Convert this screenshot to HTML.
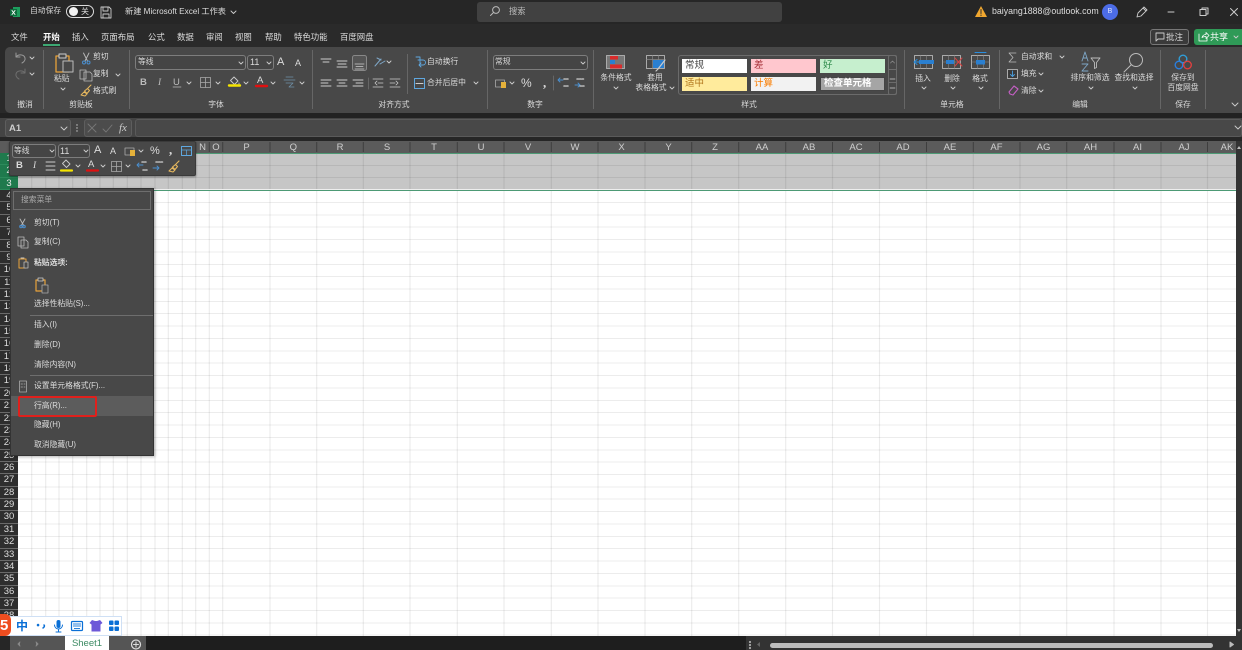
<!DOCTYPE html>
<html lang="zh"><head><meta charset="utf-8"><title>Excel</title>
<style>
html,body{margin:0;padding:0;background:#2b2b2b}
#r{position:relative;width:1242px;height:650px;overflow:hidden;background:#fff;font-family:"Liberation Sans","Noto Sans CJK SC",sans-serif;filter:blur(.35px)}
#r div,#r span{position:absolute;box-sizing:border-box}
.t{white-space:nowrap;color:#dcdcdc;font-size:7.8px;line-height:10px}
.tab{font-size:8.4px}
.c{transform:translateX(-50%)}
.box{border:1px solid #7d7d7d;border-radius:3px;background:#454545}
.sep{width:1px;background:#666}
#rh{left:0;top:153px;width:18px;height:484px;background:#2e2e2e}
#rh>div{position:relative!important;width:18px;height:12.365px;border-bottom:1px solid #6a6a6a;color:#ddd;font-size:9.5px;line-height:11.5px;text-align:center}
#rh>div.s{background:#1f7a4d;color:#e8e8e8;border-bottom-color:#2c8a5b}
.col{top:142px;height:12px;font-size:9.5px;line-height:12px;color:#cfcfcf;transform:translateX(-50%);white-space:nowrap}
.m{left:34px;font-size:7.8px;line-height:10px;color:#dcdcdc;white-space:nowrap}
.st{height:14px;font-size:9.5px;line-height:14px;padding-left:3px;white-space:nowrap}
</style></head><body><div id="r">

<!-- chrome backgrounds -->
<div style="left:0;top:0;width:1242px;height:24px;background:#262626"></div>
<div style="left:0;top:24px;width:1242px;height:93px;background:#2a2a2a"></div>
<div style="left:5px;top:47px;width:1237px;height:66px;background:#484848;border-radius:5px 0 0 5px"></div>
<div style="left:0;top:113px;width:1242px;height:28px;background:#222"></div>
<div style="left:0;top:118px;width:1242px;height:19px;background:#444"></div>
<div style="left:0;top:137px;width:1242px;height:4px;background:#262626"></div>

<!-- grid -->
<div style="left:18px;top:153px;width:1218px;height:37.5px;background:#c6c6c6"></div>
<div style="left:18px;top:153px;width:1218px;height:483px;background-image:repeating-linear-gradient(to bottom,transparent 0,transparent 11.365px,rgba(0,0,0,.075) 11.365px,rgba(0,0,0,.075) 12.365px);background-position:0 .5px"></div>
<svg style="position:absolute;left:0;top:0" width="1242" height="650"><path fill="none" stroke="#000" stroke-opacity=".075" stroke-width="1.2" d="M31.7 153V636M45.7 153V636M59 153V636M72.7 153V636M86.7 153V636M100 153V636M113.3 153V636M127.3 153V636M141 153V636M155 153V636M168.3 153V636M182.3 153V636M195.7 153V636M209.3 153V636M222.7 153V636M270 153V636M316.7 153V636M363.3 153V636M410 153V636M457.3 153V636M504 153V636M551.3 153V636M598 153V636M645 153V636M691.7 153V636M738.7 153V636M785.7 153V636M832.5 153V636M879.5 153V636M926.5 153V636M973.3 153V636M1020 153V636M1066.7 153V636M1114 153V636M1161 153V636M1207.5 153V636"/></svg>
<div style="left:18px;top:189px;width:1218px;height:1px;background:#eee"></div>
<div style="left:18px;top:190px;width:1218px;height:1.4px;background:#4d9a75"></div>

<!-- column headers -->
<div style="left:0;top:141px;width:1236px;height:12px;background:#5b5b5b"></div>
<div style="left:18px;top:152.500px;width:1218px;height:1.2px;background:#4d9a75"></div>
<svg style="position:absolute;left:0;top:0" width="1242" height="155"><path fill="none" stroke="#3e3e3e" stroke-width="1" d="M195.7 142V152M209.3 142V152M222.7 142V152M270 142V152M316.7 142V152M363.3 142V152M410 142V152M457.3 142V152M504 142V152M551.3 142V152M598 142V152M645 142V152M691.7 142V152M738.7 142V152M785.7 142V152M832.5 142V152M879.5 142V152M926.5 142V152M973.3 142V152M1020 142V152M1066.7 142V152M1114 142V152M1161 142V152M1207.5 142V152"/></svg>
<span class="col" style="left:202.5px">N</span><span class="col" style="left:216px">O</span><span class="col" style="left:246.5px">P</span><span class="col" style="left:293.3px">Q</span><span class="col" style="left:340px">R</span><span class="col" style="left:387px">S</span><span class="col" style="left:434px">T</span><span class="col" style="left:481px">U</span><span class="col" style="left:528px">V</span><span class="col" style="left:575px">W</span><span class="col" style="left:621.5px">X</span><span class="col" style="left:668.5px">Y</span><span class="col" style="left:715px">Z</span><span class="col" style="left:762px">AA</span><span class="col" style="left:809px">AB</span><span class="col" style="left:856px">AC</span><span class="col" style="left:903px">AD</span><span class="col" style="left:950px">AE</span><span class="col" style="left:996.5px">AF</span><span class="col" style="left:1043.5px">AG</span><span class="col" style="left:1090.5px">AH</span><span class="col" style="left:1137.5px">AI</span><span class="col" style="left:1184px">AJ</span><span class="col" style="left:1227px">AK</span>

<!-- row headers -->
<div id="rh"><div class="s">1</div><div class="s">2</div><div class="s">3</div><div>4</div><div>5</div><div>6</div><div>7</div><div>8</div><div>9</div><div>10</div><div>11</div><div>12</div><div>13</div><div>14</div><div>15</div><div>16</div><div>17</div><div>18</div><div>19</div><div>20</div><div>21</div><div>22</div><div>23</div><div>24</div><div>25</div><div>26</div><div>27</div><div>28</div><div>29</div><div>30</div><div>31</div><div>32</div><div>33</div><div>34</div><div>35</div><div>36</div><div>37</div><div>38</div><div>39</div></div>

<!-- right scrollbar -->
<div style="left:1236px;top:141px;width:6px;height:495px;background:#333"></div>

<!-- status bar -->
<div style="left:0;top:636px;width:1242px;height:14px;background:#262626"></div>
<div style="left:10px;top:636px;width:55px;height:14px;background:#555"></div>
<div style="left:65px;top:636px;width:44px;height:14px;background:#fff;color:#3c8a63;font-size:9.5px;line-height:16px;text-align:center">Sheet1</div>
<div style="left:109px;top:636px;width:37px;height:14px;background:#555"></div>
<div style="left:146px;top:636px;width:600px;height:14px;background:#1e1e1e"></div>
<div style="left:746px;top:636px;width:496px;height:14px;background:#333"></div>
<div style="left:770px;top:643px;width:443px;height:5px;background:#bdbdbd;border-radius:3px"></div>

<!-- mini toolbar -->
<div style="left:9px;top:141px;width:187px;height:35px;background:#484848;border:1px solid #3a3a3a;border-radius:2px;box-shadow:0 1px 2px rgba(0,0,0,.4)"></div>
<div class="box" style="left:12px;top:144px;width:44px;height:14px"></div>
<div class="box" style="left:58px;top:144px;width:32px;height:14px"></div>
<span class="t" style="left:14px;top:146px">等线</span>
<span class="t" style="left:60px;top:146px;font-size:9px">11</span>

<!-- context menu -->
<div style="left:10px;top:188px;width:144px;height:268px;background:#484848;border:1px solid #333;box-shadow:1px 1px 3px rgba(0,0,0,.3)"></div>
<div style="left:13px;top:191px;width:138px;height:19px;border:1px solid #6e6e6e"></div>
<span class="m" style="left:21px;top:195px;color:#aaa">搜索菜单</span>
<div style="left:11px;top:396px;width:142px;height:20px;background:#5c5c5c"></div>
<div style="left:30px;top:315px;width:123px;height:1px;background:#6e6e6e"></div>
<div style="left:30px;top:375px;width:123px;height:1px;background:#6e6e6e"></div>
<span class="m" style="top:218px">剪切(T)</span>
<span class="m" style="top:237px">复制(C)</span>
<span class="m" style="top:258px;font-weight:bold">粘贴选项:</span>
<span class="m" style="top:299px">选择性粘贴(S)...</span>
<span class="m" style="top:320px">插入(I)</span>
<span class="m" style="top:340px">删除(D)</span>
<span class="m" style="top:360px">清除内容(N)</span>
<span class="m" style="top:381px">设置单元格格式(F)...</span>
<span class="m" style="top:401px">行高(R)...</span>
<span class="m" style="top:420px">隐藏(H)</span>
<span class="m" style="top:440px">取消隐藏(U)</span>
<div style="left:18px;top:396px;width:79px;height:21px;border:2px solid #e0201c;border-radius:2px"></div>

<!-- IME toolbar -->
<div style="left:0;top:616px;width:122px;height:20px;background:#fff;border:1px solid #cfe0f5"></div>
<div style="left:-8px;top:614px;width:19px;height:22px;background:#ee4d1f;border-radius:6px"></div>
<span class="t" style="left:0;top:617px;font-size:15px;line-height:18px;font-weight:bold;color:#fff">5</span>
<span class="t" style="left:16px;top:619px;font-size:12px;line-height:14px;font-weight:bold;color:#0a6fd6">中</span>

<!-- title bar -->
<span class="t" style="left:30px;top:6px">自动保存</span>
<div style="left:66px;top:5px;width:28px;height:13px;border:1px solid #ddd;border-radius:7px;background:#222"></div>
<div style="left:69px;top:7px;width:9px;height:9px;border-radius:50%;background:#f2f2f2"></div>
<span class="t" style="left:81px;top:7px;font-size:8px;line-height:9px">关</span>
<span class="t" style="left:125px;top:6px;font-size:8.2px;line-height:12px">新建 Microsoft Excel 工作表</span>
<div style="left:477px;top:2px;width:305px;height:20px;background:#414141;border-radius:3px"></div>
<span class="t" style="left:509px;top:6px;font-size:8.3px;color:#bbb">搜索</span>
<span class="t" style="left:992px;top:6px;font-size:8.8px;line-height:11px">baiyang1888@outlook.com</span>
<div style="left:1102px;top:4px;width:16px;height:16px;border-radius:50%;background:#4c6ce6;color:#dfe6ff;font-size:7px;line-height:16px;text-align:center">B</div>

<!-- tabs -->
<span class="t tab" style="left:11px;top:32px">文件</span>
<span class="t tab" style="left:43px;top:32px;font-weight:bold;color:#fff">开始</span>
<div style="left:43px;top:44px;width:17px;height:1.5px;background:#3da873"></div>
<span class="t tab" style="left:72px;top:32px">插入</span>
<span class="t tab" style="left:101px;top:32px">页面布局</span>
<span class="t tab" style="left:148px;top:32px">公式</span>
<span class="t tab" style="left:177px;top:32px">数据</span>
<span class="t tab" style="left:206px;top:32px">审阅</span>
<span class="t tab" style="left:235px;top:32px">视图</span>
<span class="t tab" style="left:265px;top:32px">帮助</span>
<span class="t tab" style="left:294px;top:32px">特色功能</span>
<span class="t tab" style="left:340px;top:32px">百度网盘</span>
<div style="left:1150px;top:29px;width:39px;height:16px;border:1px solid #777;border-radius:3px;background:#3a3a3a"></div>
<span class="t" style="left:1166px;top:32px;font-size:8.5px">批注</span>
<div style="left:1194px;top:29px;width:48px;height:16px;background:#2f9a57;border-radius:3px 0 0 3px"></div>
<span class="t" style="left:1210px;top:32px;font-size:9px;color:#fff">共享</span>

<!-- ribbon separators -->
<div class="sep" style="left:43px;top:50px;height:59px"></div>
<div class="sep" style="left:129px;top:50px;height:59px"></div>
<div class="sep" style="left:312px;top:50px;height:59px"></div>
<div class="sep" style="left:407px;top:54px;height:40px"></div>
<div class="sep" style="left:487px;top:50px;height:59px"></div>
<div class="sep" style="left:593px;top:50px;height:59px"></div>
<div class="sep" style="left:904px;top:50px;height:59px"></div>
<div class="sep" style="left:999px;top:50px;height:59px"></div>
<div class="sep" style="left:1160px;top:50px;height:59px"></div>
<div class="sep" style="left:1205px;top:50px;height:59px"></div>

<!-- ribbon text -->
<span class="t c" style="left:25px;top:100px">撤消</span>
<span class="t c" style="left:81px;top:100px">剪贴板</span>
<span class="t c" style="left:216px;top:100px">字体</span>
<span class="t c" style="left:394px;top:100px">对齐方式</span>
<span class="t c" style="left:535px;top:100px">数字</span>
<span class="t c" style="left:749px;top:100px">样式</span>
<span class="t c" style="left:952px;top:100px">单元格</span>
<span class="t c" style="left:1080px;top:100px">编辑</span>
<span class="t c" style="left:1183px;top:100px">保存</span>

<span class="t" style="left:54px;top:74px">粘贴</span>
<span class="t" style="left:93px;top:52px">剪切</span>
<span class="t" style="left:93px;top:69px">复制</span>
<span class="t" style="left:93px;top:86px">格式刷</span>

<div class="box" style="left:135px;top:55px;width:111px;height:15px"></div>
<div class="box" style="left:247px;top:55px;width:27px;height:15px"></div>
<span class="t" style="left:138px;top:57px">等线</span>
<span class="t" style="left:250px;top:57px;font-size:9px">11</span>
<span class="t" style="left:140px;top:78px;font-size:9.5px;font-weight:bold;color:#bbb">B</span>
<span class="t" style="left:158px;top:78px;font-size:9.5px;font-style:italic;font-family:'Liberation Serif',serif;color:#bbb">I</span>
<span class="t" style="left:173px;top:78px;font-size:9.5px;color:#bbb">U</span>
<span class="t" style="left:277px;top:56px;font-size:11px;line-height:13px">A</span>
<span class="t" style="left:295px;top:58px;font-size:9px">A</span>
<span class="t" style="left:257px;top:76px;font-size:9.5px">A</span>
<span class="t" style="left:427px;top:57px">自动换行</span>
<span class="t" style="left:427px;top:78px">合并后居中</span>

<div class="box" style="left:493px;top:55px;width:95px;height:15px"></div>
<span class="t" style="left:495px;top:57px">常规</span>
<span class="t" style="left:521px;top:77px;font-size:12px;line-height:13px">%</span>
<span class="t" style="left:543px;top:76px;font-size:13px;line-height:13px;font-weight:bold;font-family:'Liberation Serif',serif">,</span>

<span class="t c" style="left:616px;top:73px">条件格式</span>
<span class="t c" style="left:655px;top:73px">套用</span>
<span class="t c" style="left:651px;top:83px">表格格式</span>

<!-- styles gallery -->
<div style="left:678px;top:55px;width:219px;height:40px;border:1px solid #6b6b6b;border-radius:3px"></div>
<div class="st" style="left:682px;top:59px;width:65px;background:#fff;color:#444">常规</div>
<div class="st" style="left:751px;top:59px;width:65px;background:#ffc7ce;color:#a9343c">差</div>
<div class="st" style="left:820px;top:59px;width:65px;background:#c6efce;color:#2d8a4a">好</div>
<div class="st" style="left:682px;top:77px;width:65px;background:#ffeb9c;color:#b0741a">适中</div>
<div class="st" style="left:751px;top:77px;width:65px;background:#f2f2f2;color:#fa7d00">计算</div>
<div class="st" style="left:820px;top:77px;width:65px;background:#a5a5a5;color:#fff;font-weight:bold;border:1px solid #444;line-height:12px">检查单元格</div>
<div style="left:888px;top:55px;width:9px;height:40px;border:1px solid #6b6b6b;border-radius:2px"></div>
<div style="left:888px;top:69px;width:9px;height:1px;background:#6b6b6b"></div>
<div style="left:888px;top:82px;width:9px;height:1px;background:#6b6b6b"></div>

<span class="t c" style="left:923px;top:74px">插入</span>
<span class="t c" style="left:952px;top:74px">删除</span>
<span class="t c" style="left:980px;top:74px">格式</span>
<span class="t" style="left:1021px;top:52px">自动求和</span>
<span class="t" style="left:1021px;top:69px">填充</span>
<span class="t" style="left:1021px;top:86px">清除</span>
<span class="t c" style="left:1090px;top:73px">排序和筛选</span>
<span class="t c" style="left:1134px;top:73px">查找和选择</span>
<span class="t c" style="left:1183px;top:73px">保存到</span>
<span class="t c" style="left:1183px;top:83px">百度网盘</span>

<!-- formula bar -->
<div style="left:5px;top:119px;width:66px;height:18px;background:#4c4c4c;border:1px solid #5e5e5e;border-radius:3px"></div>
<span class="t" style="left:9px;top:123px;font-size:9.5px;line-height:11px;font-weight:bold;color:#ccc">A1</span>
<div style="left:84px;top:119px;width:48px;height:18px;background:#4c4c4c;border:1px solid #5e5e5e;border-radius:3px"></div>
<div style="left:135px;top:119px;width:1107px;height:18px;background:#484848;border:1px solid #5a5a5a;border-radius:3px"></div>
<span class="t" style="left:119px;top:122px;font-size:11px;line-height:12px;font-style:italic;font-family:'Liberation Serif',serif;color:#ccc">fx</span>

<!-- mini toolbar text -->
<span class="t" style="left:94px;top:144px;font-size:11px;line-height:13px">A</span>
<span class="t" style="left:110px;top:146px;font-size:9px">A</span>
<span class="t" style="left:150px;top:145px;font-size:11px;line-height:13px">%</span>
<span class="t" style="left:169px;top:143px;font-size:13px;line-height:13px;font-weight:bold;font-family:'Liberation Serif',serif">,</span>
<span class="t" style="left:16px;top:161px;font-size:9.5px;font-weight:bold">B</span>
<span class="t" style="left:33px;top:161px;font-size:9.5px;font-style:italic;font-family:'Liberation Serif',serif">I</span>
<span class="t" style="left:88px;top:160px;font-size:9.5px">A</span>

<!-- icons overlay -->
<svg style="position:absolute;left:0;top:0" width="1242" height="650" fill="none" stroke-linecap="round" stroke-linejoin="round">
<!-- excel -->
<path d="M13 7h7v10h-7z" fill="#1d9e5e"/><path d="M10 9h7v7h-7z" fill="#0f6b3c"/><path d="M12 10.5l3 4M15 10.5l-3 4" stroke="#fff" stroke-width=".9"/>
<!-- save -->
<path d="M101 7h8l2 2v9h-10zM103 7v4h5V7M103 18v-4h6v4" stroke="#ccc" stroke-width=".9"/>
<!-- search -->
<circle cx="496" cy="10" r="3.4" stroke="#bbb"/><path d="M493.5 12.5l-3 3" stroke="#bbb"/>
<!-- warning -->
<path d="M981 6l6 11h-12z" fill="#f0a72f"/><path d="M981 9.5v4M981 15v.6" stroke="#333" stroke-width="1"/>
<!-- pen -->
<path d="M1137 17l1-4 6-6 3 3-6 6zM1143 8l3 3" stroke="#ccc" stroke-width=".9"/>
<!-- window controls -->
<path d="M1168 12h6" stroke="#ccc"/><path d="M1200 9.5h6v6h-6zM1202 9.500v-1.500h6v6h-2" stroke="#ccc"/><path d="M1230.500 8.500l7 7M1237.500 8.500l-7 7" stroke="#ccc"/>
<!-- comment, share -->
<path d="M1156 33h8v6h-6l-2 2z" stroke="#ccc" stroke-width=".9"/>
<path d="M1199 34v7h8v-3M1202 37.500c.6-2 2-3 4-3v-2l3 3-3 3v-2c-1.500 0-3 .3-4 1" stroke="#fff" stroke-width=".8"/>
<!-- undo redo -->
<path d="M16 53v4h4M16 57c2-3 8-3 9 1 .5 2-1 4-3 5" stroke="#9a9a9a" stroke-width="1"/>
<path d="M25 69v4h-4M25 73c-2-3-8-3-9 1-.5 2 1 4 3 5" stroke="#6f6f6f" stroke-width="1"/>
<!-- paste -->
<path d="M56 56h13v16h-13z" stroke="#e7a23a" stroke-width="1.300"/><path d="M59 54h7v4h-7z" stroke="#ccc" fill="#484848"/><path d="M63 61h10v11h-10z" stroke="#bbb" fill="#484848"/>
<!-- cut copy brush -->
<path d="M83.500 53l4 8M89 53l-4 8" stroke="#bbb" stroke-width=".9"/><circle cx="84" cy="62.500" r="1.500" stroke="#4a8fd0"/><circle cx="88.500" cy="62.500" r="1.500" stroke="#4a8fd0"/>
<path d="M80 70h6v9h-6zM84 72h6l2 2v7h-8z" stroke="#bbb" stroke-width=".8" /><path d="M81 95l3-3 3 2-2 2zM84.500 91l3-2.500 2 2-2.500 3zM88 88l3-3" stroke="#e7b85e" stroke-width="1"/>
<!-- underline + borders + fill -->
<path d="M173 87h8" stroke="#bbb" stroke-width=".7"/>
<path d="M200.500 77.500h10v10h-10zM205.500 77.500v10M200.500 82.500h10" stroke="#aaa" stroke-width=".8"/>
<path d="M234 77l4 4-3.500 3.500-4-4zM239 83v1" stroke="#ccc" stroke-width=".9"/><path d="M229 85.500h11" stroke="#f5e400" stroke-width="2.400"/>
<path d="M256 86h11" stroke="#e01010" stroke-width="2.400"/>
<path d="M284 80h11M286 77h7M286 83h7l-4 4h5" stroke="#6f90a8" stroke-width=".8"/>
<!-- align -->
<path d="M321 59h10M323 62h6M337 61h10M338 64h8M337 67h10" stroke="#ccc" stroke-width=".9"/>
<rect x="352.500" y="55.500" width="14" height="15" rx="2" stroke="#888" fill="#555"/><path d="M355 64h9M356 66.500h7M355 69h9" stroke="#ccc" stroke-width=".8"/>
<path d="M375 66l6-7M377 58l4 2M380 64l5-3" stroke="#7fa7c7" stroke-width="1"/>
<path d="M321 80h10M321 83h7M321 86h10M337 80h10M339 83h6M337 86h10M353 80h10M356 83h7M353 86h10" stroke="#ccc" stroke-width=".9"/>
<path d="M373 79h10M373 87h10M378 83h5M375 83l2-2M375 83l2 2" stroke="#ccc" stroke-width=".8"/><path d="M390 79h10M390 87h10M390 83h5M398 83l-2-2M398 83l-2 2" stroke="#ccc" stroke-width=".8"/>
<path d="M368.500 78v11" stroke="#666"/>
<!-- wrap / merge -->
<path d="M416 57h4v7M418 60h5a2 2 0 0 1 0 5h-4M421 63l-2 2 2 2" stroke="#5fa8e0" stroke-width=".9"/>
<rect x="414.500" y="78.500" width="10" height="10" stroke="#5fa8e0"/><path d="M416 83.500h7" stroke="#ccc"/>
<!-- number -->
<path d="M495.500 80h9v7h-9z" stroke="#aaa" stroke-width=".8"/><rect x="501" y="82" width="5" height="6" fill="#e5b13a"/>
<path d="M553.500 76v14" stroke="#666"/>
<path d="M558 80h5M560 78l-2 2 2 2" stroke="#4a90d0" stroke-width=".9"/><path d="M564 79h4M564 86h4" stroke="#bbb" stroke-width="1.600" stroke-dasharray="1.500 1"/>
<path d="M580 85h-5M578 83l2 2-2 2" stroke="#4a90d0" stroke-width=".9"/><path d="M577 79h7M580 86h5" stroke="#bbb" stroke-width="1.600" stroke-dasharray="1.500 1"/>
<!-- cond fmt -->
<rect x="606.500" y="55.500" width="18" height="13" stroke="#aaa" fill="#777"/><rect x="610" y="56" width="8" height="3.500" fill="#d92b2b"/><rect x="610" y="60" width="5" height="4" fill="#2a7fd0"/><rect x="610" y="64.500" width="12" height="4" fill="#d92b2b"/>
<!-- table fmt -->
<rect x="646.500" y="55.500" width="18" height="13" stroke="#aaa"/><path d="M646.500 59.500h18M652.500 55.500v13M658.500 55.500v13" stroke="#888" stroke-width=".7"/><rect x="653" y="60" width="11" height="8" fill="#2a7fd0"/><path d="M665 60l-7 9-2 2" stroke="#ccc" stroke-width="1.200"/>
<!-- style scrolls -->
<path d="M890.500 63l2-2 2 2" stroke="#888" stroke-width=".8"/><path d="M890 79h5M890 88h5" stroke="#ccc" stroke-width=".7"/>
<!-- insert delete format -->
<rect x="914.500" y="55.500" width="18" height="13" stroke="#aaa"/><path d="M914.500 62h18M920.500 55.500v13M926.500 55.500v13" stroke="#888" stroke-width=".6"/><rect x="919" y="60" width="15" height="4" fill="#2a7fd0"/><path d="M914 62h6M917 59.500l-3 2.500 3 2.500" stroke="#2a8fe0" stroke-width="1"/>
<rect x="942.500" y="55.500" width="18" height="13" stroke="#aaa"/><path d="M942.500 62h18M948.500 55.500v13M954.500 55.500v13" stroke="#888" stroke-width=".6"/><rect x="946" y="60" width="8" height="4" fill="#2a7fd0"/><path d="M955 58l7 8M962 58l-7 8" stroke="#d84040" stroke-width="1"/>
<rect x="971.500" y="55.500" width="18" height="13" stroke="#aaa"/><path d="M971.500 62h18M977.500 55.500v13M983.500 55.500v13" stroke="#888" stroke-width=".6"/><rect x="976" y="60" width="9" height="4.500" fill="#2a7fd0"/><path d="M975 52.500h11" stroke="#2a8fe0"/>
<!-- editing -->
<path d="M1016 53h-7l4 4.500-4 4.500h7" stroke="#bbb" stroke-width=".8"/>
<rect x="1007.500" y="69.500" width="10" height="9" stroke="#aaa" fill="#3a3a3a"/><path d="M1012.500 71v5M1010.500 74.500l2 2 2-2" stroke="#4a9fe0" stroke-width=".9"/>
<path d="M1009 92l5-6 4 3-5 6-3-1z" stroke="#c55fc5" stroke-width="1.100"/>
<!-- sort & find -->
<path d="M1085 52l-3 9M1085 52l3 9M1083 58h4M1082 64h6l-6 7h6" stroke="#7fa7c7" stroke-width=".9"/><path d="M1091 58h9l-3.500 4.500v5l-2 1v-6z" stroke="#bbb" stroke-width=".9"/>
<circle cx="1136" cy="60" r="6.500" stroke="#bbb" stroke-width="1"/><path d="M1131 65l-7 7" stroke="#bbb" stroke-width="1"/>
<!-- baidu -->
<circle cx="1183" cy="59" r="3.800" stroke="#2f9ed8" stroke-width="1.400"/><circle cx="1179" cy="65" r="3.800" stroke="#2a7fe0" stroke-width="1.400"/><circle cx="1187.500" cy="65" r="3.800" stroke="#e04040" stroke-width="1.400"/>
<!-- carets -->
<path d="M30 57l2 2 2-2M30 73l2 2 2-2M61 88l2 2 2-2M116 74l2 2 2-2M239 62l2 2 2-2M267 62l2 2 2-2M187 82l2 2 2-2M216 82l2 2 2-2M244 82l2 2 2-2M271 82l2 2 2-2M300 82l2 2 2-2M387 61l2 2 2-2M474 82l2 2 2-2M581 62l2 2 2-2M510 82l2 2 2-2M614 87l2 2 2-2M670 87l2 2 2-2M922 87l2 2 2-2M951 87l2 2 2-2M979 87l2 2 2-2M1060 56l2 2 2-2M1039 73l2 2 2-2M1039 90l2 2 2-2M1089 87l2 2 2-2M1133 87l2 2 2-2M1232 103l3 3 3-3M1235 126l3 3 3-3M61 127l3 3 3-3M231 11l2.500 2.500 2.500-2.500M1234 36l2 2 2-2M50 150l2 2 2-2M84 150l2 2 2-2M139 150l2 2 2-2M76 165l2 2 2-2M101 165l2 2 2-2M126 165l2 2 2-2" stroke="#ccc" stroke-width=".9"/>
<!-- formula-bar icons -->
<circle cx="77" cy="125" r=".7" fill="#ccc"/><circle cx="77" cy="128" r=".7" fill="#ccc"/><circle cx="77" cy="131" r=".7" fill="#ccc"/>
<path d="M88 124l8 8M96 124l-8 8M103 129l3 3 6-7" stroke="#777" stroke-width=".9"/>
<!-- mini toolbar icons -->
<path d="M125 148h9v7h-9z" stroke="#aaa" stroke-width=".8"/><rect x="130" y="150" width="5" height="6" fill="#e5b13a"/>
<rect x="181.500" y="146.500" width="10" height="9" stroke="#5fa8e0"/><path d="M181.500 150h10M186.500 150v5" stroke="#5fa8e0" stroke-width=".7"/>
<path d="M46 162h9M46 166h9M46 170h9" stroke="#ccc" stroke-width=".9"/>
<path d="M66 160l4 4-3.500 3.500-4-4z" stroke="#ccc" stroke-width=".9"/><path d="M61 170.500h11" stroke="#f5e400" stroke-width="2.200"/>
<path d="M87 170.500h11" stroke="#e01010" stroke-width="2.200"/>
<path d="M111.500 161.500h10v10h-10zM116.500 161.500v10M111.500 166.500h10" stroke="#aaa" stroke-width=".8"/>
<path d="M137 165h6M139 163l-2 2 2 2" stroke="#4a90d0" stroke-width=".9"/><path d="M142 162h5M143 170h4" stroke="#bbb" stroke-width="1.600" stroke-dasharray="1.500 1"/>
<path d="M159 168h-6M157 166l2 2-2 2" stroke="#4a90d0" stroke-width=".9"/><path d="M156 162h7" stroke="#bbb" stroke-width="1.600" stroke-dasharray="1.500 1"/>
<path d="M169 171l3-3 3 2-2 2zM172.500 167l3-2.500 2 2-2.500 3zM176 164l3-3" stroke="#e7b85e" stroke-width="1.100"/>
<!-- menu icons -->
<path d="M20 219l4 7M25 219l-4 7" stroke="#bbb" stroke-width=".9"/><circle cx="21" cy="226.500" r="1.300" stroke="#4a8fd0"/><circle cx="24" cy="226.500" r="1.300" stroke="#4a8fd0"/>
<path d="M18 237h6v9h-6zM21 240h5l2 2v6h-7z" stroke="#bbb" stroke-width=".8"/>
<path d="M19 259h7v9h-7z" stroke="#e7a23a" stroke-width="1"/><path d="M24 262h4v6h-4z" stroke="#bbb" fill="#484848" stroke-width=".8"/><path d="M21 258h3" stroke="#ccc"/>
<path d="M36 280h9v11h-9z" stroke="#e7a23a" stroke-width="1.200"/><path d="M38 278h5v3h-5z" stroke="#ccc" fill="#484848" stroke-width=".8"/><path d="M42 285h6v8h-6z" stroke="#aaa" fill="#484848" stroke-width=".8"/>
<path d="M19.500 381h7v11h-7zM21 384h1.500M21 387h1.500M24 384h1M24 387h1" stroke="#aaa" stroke-width=".8"/>
<!-- IME icons -->
<path d="M38 624.500a.6.600 0 1 0 .1 0" stroke="#0a6fd6" stroke-width="1.500"/><path d="M44 625c.8.600.5 2-1 3" stroke="#0a6fd6" stroke-width="1.500"/>
<rect x="56.500" y="620" width="4" height="8" rx="2" fill="#0a6fd6"/><path d="M54.500 625a4 4 0 0 0 8 0M58.500 629v3M56 632h5" stroke="#0a6fd6" stroke-width="1"/>
<rect x="71.500" y="621.500" width="11" height="9" rx="1" stroke="#0a6fd6" stroke-width="1.200"/><path d="M73.500 624h7M73.500 626h7M74.500 628.500h5" stroke="#0a6fd6" stroke-width="1" stroke-dasharray="1 1"/>
<path d="M92 620l3 1h2l3-1 2.500 3-2 1.500v7h-9v-7l-2-1.500z" fill="#6d58d8"/>
<rect x="109" y="620.500" width="4.500" height="4.500" rx="1" fill="#0a6fd6"/><rect x="114.500" y="620.500" width="4.500" height="4.500" rx="1" fill="#0a6fd6"/><rect x="109" y="626.500" width="4.500" height="4.500" rx="1" fill="#0a6fd6"/><rect x="114.500" y="626.500" width="4.500" height="4.500" rx="1" fill="#0a6fd6"/>
<!-- status bar icons -->
<path d="M20 642l-2 2 2 2" fill="#888" stroke="#888"/><path d="M36 642l2 2-2 2" fill="#888" stroke="#888"/>
<circle cx="136" cy="644.500" r="4.500" stroke="#ddd" stroke-width="1.200"/><path d="M133.500 644.500h5M136 642v5" stroke="#ddd"/>
<circle cx="750" cy="642" r=".6" fill="#aaa" stroke="#aaa"/><circle cx="750" cy="645" r=".6" fill="#aaa" stroke="#aaa"/><circle cx="750" cy="648" r=".6" fill="#aaa" stroke="#aaa"/>
<path d="M1230 642v5l3.500-2.500z" fill="#bbb" stroke="#bbb"/><path d="M760 642v5l-3-2.500z" fill="#666"/>
<path d="M1239 146l-2 3h4z" fill="#bbb"/><path d="M1239 632l-2-3h4z" fill="#bbb"/>
</svg>
</div></body></html>
